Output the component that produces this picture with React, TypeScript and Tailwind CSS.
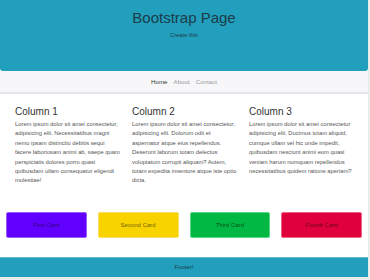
import React from "react";

const columns = [
  {
    title: "Column 1",
    text: "Lorem ipsum dolor sit amet consectetur, adipisicing elit. Necessitatibus magni nemo ipsam distinctio debitis sequi facere laboriosam animi ab, saepe quam perspiciatis dolores porro quasi quibusdam ullam consequatur eligendi molestiae!",
  },
  {
    title: "Column 2",
    text: "Lorem ipsum dolor sit amet consectetur, adipisicing elit. Dolorum odit et aspernatur atque eius repellendus. Deserunt laborum totam delectus voluptatum corrupti aliquam? Autem, totam expedita inventore atque iste optio dicta.",
  },
  {
    title: "Column 3",
    text: "Lorem ipsum dolor sit amet consectetur adipisicing elit. Ducimus totam aliquid, cumque ullam vel hic unde impedit, quibusdam nesciunt animi eum quasi veniam harum numquam repellendus necessitatibus quidem ratione aperiam?",
  },
];

const cards = [
  { label: "First Card", color: "bg-[#6200ff] border-[#9a5cff]" },
  { label: "Second Card", color: "bg-[#f9d300] border-[#fbe060]" },
  { label: "Third Card", color: "bg-[#00b843] border-[#5ad68a]" },
  { label: "Fourth Card", color: "bg-[#e0003c] border-[#ee6088]" },
];

export default function App() {
  return (
    <div className="w-[370px] h-[280px] bg-[#ececec] overflow-hidden font-['Liberation_Sans',Arial,sans-serif]">
      <div className="w-[368px] h-[277px] bg-white flex flex-col">
        {/* Jumbotron */}
        <header className="h-[71px] bg-[#219fbc] rounded-b-[3px] flex flex-col items-center pt-[8px] text-[#1d3b48]">
          <h1 className="text-[15px] leading-[20px]">Bootstrap Page</h1>
          <p className="text-[5.8px] leading-[8px] mt-[3px]">Create this</p>
        </header>

        {/* Nav */}
        <nav className="h-[23px] bg-[#f7f7f9] border-b-[2px] border-[#e6e6e8] flex items-center justify-center gap-[6px] text-[6.2px]">
          <span className="text-[#333]">Home</span>
          <span className="text-[#999]">About</span>
          <span className="text-[#999]">Contact</span>
        </nav>

        {/* Columns */}
        <section className="grid grid-cols-3 gap-[11px] pl-[15px] pr-[13px] pt-[11px]">
          {columns.map((c) => (
            <div key={c.title}>
              <h2 className="text-[10px] leading-[14px] text-[#333]">{c.title}</h2>
              <p className="text-[5.8px] leading-[9.4px] text-[#555] mt-[1px]">{c.text}</p>
            </div>
          ))}
        </section>

        {/* Cards */}
        <section className="grid grid-cols-4 gap-[11px] px-[6px] mt-auto mb-[19px]">
          {cards.map((c) => (
            <div
              key={c.label}
              className={`h-[26px] rounded-[2px] border flex items-center justify-center text-[6px] text-[#00000099] ${c.color}`}
            >
              {c.label}
            </div>
          ))}
        </section>

        {/* Footer */}
        <footer className="h-[20px] bg-[#219fbc] border-t border-[#5dbad0] flex items-center justify-center text-[6px] text-[#1d3b48]">
          Footer!
        </footer>
      </div>
    </div>
  );
}
